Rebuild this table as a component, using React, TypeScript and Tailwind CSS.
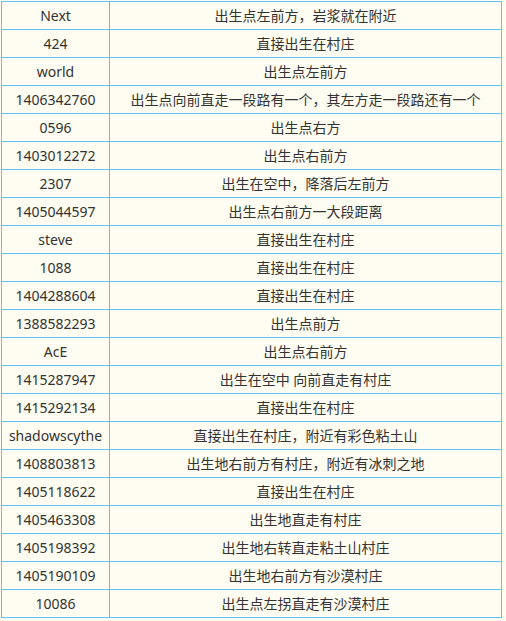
import React from "react";

const ROWS: [string, string][] = [
  ["Next", "出生点左前方，岩浆就在附近"],
  ["424", "直接出生在村庄"],
  ["world", "出生点左前方"],
  ["1406342760", "出生点向前直走一段路有一个，其左方走一段路还有一个"],
  ["0596", "出生点右方"],
  ["1403012272", "出生点右前方"],
  ["2307", "出生在空中，降落后左前方"],
  ["1405044597", "出生点右前方一大段距离"],
  ["steve", "直接出生在村庄"],
  ["1088", "直接出生在村庄"],
  ["1404288604", "直接出生在村庄"],
  ["1388582293", "出生点前方"],
  ["AcE", "出生点右前方"],
  ["1415287947", "出生在空中 向前直走有村庄"],
  ["1415292134", "直接出生在村庄"],
  ["shadowscythe", "直接出生在村庄，附近有彩色粘土山"],
  ["1408803813", "出生地右前方有村庄，附近有冰刺之地"],
  ["1405118622", "直接出生在村庄"],
  ["1405463308", "出生地直走有村庄"],
  ["1405198392", "出生地右转直走粘土山村庄"],
  ["1405190109", "出生地右前方有沙漠村庄"],
  ["10086", "出生点左拐直走有沙漠村庄"],
];

export default function App() {
  return (
    <div className="min-h-screen bg-[#fffdf1] pt-px pl-px font-['Noto_Sans','Noto_Sans_CJK_SC',sans-serif] text-[14px] text-[#333]">
      <div className="grid w-[501px] grid-cols-[107px_391px] gap-px bg-[#5ec4f4] p-px">
        {ROWS.map(([seed, desc]) => (
          <React.Fragment key={seed}>
            <div className="flex h-[27px] items-center justify-center bg-[#fffdf1] leading-none">
              {seed}
            </div>
            <div className="flex h-[27px] items-center justify-center bg-[#fffdf1] leading-none">
              {desc}
            </div>
          </React.Fragment>
        ))}
      </div>
    </div>
  );
}
